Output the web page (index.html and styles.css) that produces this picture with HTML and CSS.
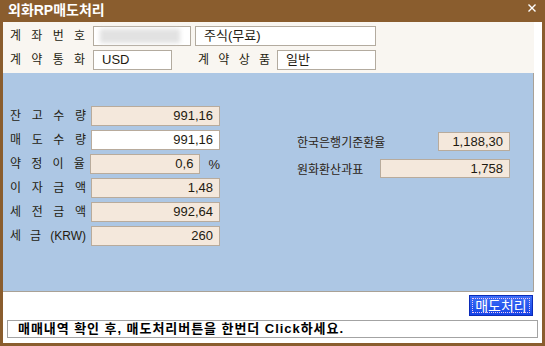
FILE: index.html
```html
<!DOCTYPE html>
<html lang="ko">
<head>
  <meta charset="UTF-8" />
  <title>외화RP매도처리</title>
  <link rel="stylesheet" href="styles.css">
</head>
<body>
  <div class="window">
    <div class="titlebar">
      <span class="title">외화RP매도처리</span>
      <svg class="close" viewBox="0 0 8 8" width="8" height="8">
        <path d="M0.5 0.5L7.5 7.5M7.5 0.5L0.5 7.5" stroke="#fff" stroke-width="1.4"/>
      </svg>
    </div>

    <div class="client">
      <div class="top">
        <div class="row">
          <span class="label">계 좌 번 호</span>
          <div class="field acct"><div class="blur"></div></div>
          <div class="field w181">주식(무료)</div>
        </div>
        <div class="row">
          <span class="label">계 약 통 화</span>
          <div class="field w79">USD</div>
          <span class="label label2">계 약 상 품</span>
          <div class="field w99">일반</div>
        </div>
      </div>

      <div class="panel">
        <div class="col-left">
          <div class="line">
            <span class="label">잔 고 수 량</span>
            <div class="num">991,16</div>
          </div>
          <div class="line">
            <span class="label">매 도 수 량</span>
            <div class="num edit">991,16</div>
          </div>
          <div class="line">
            <span class="label">약 정 이 율</span>
            <div class="num short">0,6</div>
            <span class="unit">%</span>
          </div>
          <div class="line">
            <span class="label">이 자 금 액</span>
            <div class="num">1,48</div>
          </div>
          <div class="line">
            <span class="label">세 전 금 액</span>
            <div class="num">992,64</div>
          </div>
          <div class="line">
            <span class="label">세 금 (KRW)</span>
            <div class="num">260</div>
          </div>
        </div>

        <div class="col-right">
          <div class="line">
            <span>한국은행기준환율</span>
            <div class="num rate">1,188,30</div>
          </div>
          <div class="line">
            <span>원화환산과표</span>
            <div class="num base">1,758</div>
          </div>
        </div>
      </div>

      <div class="footer">
        <button class="sell">매도처리</button>
        <div class="status">매매내역 확인 후, 매도처리버튼을 한번더 Click하세요.</div>
      </div>
    </div>
  </div>
</body>
</html>
```

FILE: styles.css
```css
* {
  box-sizing: border-box;
}

body {
  margin: 0;
  font-family: "Liberation Sans", "Noto Sans CJK KR", sans-serif;
  font-size: 12px;
  color: #2c2416;
}

.window {
  width: 545px;
  height: 346px;
  background: #8a5d2e;
  padding: 0 3px 3px 3px;
  display: flex;
  flex-direction: column;
}

.titlebar {
  height: 22px;
  display: flex;
  align-items: center;
  justify-content: space-between;
  padding: 0 6px 2px 5px;
}

.title {
  color: #fff;
  font-weight: bold;
  font-size: 14px;
  line-height: 16px;
}

.close {
  margin-top: -4px;
}

.client {
  flex: 1;
  background: #fff;
  padding-right: 4px;
  display: flex;
  flex-direction: column;
}

.top {
  height: 51px;
  margin-right: 4px;
  background: #f9f6f1;
  padding: 4px 0 0 7px;
  display: flex;
  flex-direction: column;
  gap: 4px;
}

.row {
  display: flex;
  align-items: center;
  height: 20px;
}

.label {
  width: 75px;
  text-align: justify;
  text-align-last: justify;
  line-height: 16px;
  margin-right: 8px;
  color: #241c10;
}

.label2 {
  width: 72px;
  margin-left: 26px;
  margin-right: 7px;
}

.field {
  height: 20px;
  line-height: 18px;
  background: #fff;
  border: 1px solid #b3ab9f;
  padding-left: 8px;
  font-size: 13px;
  color: #1e1a10;
}

.acct {
  width: 98px;
  margin-right: 4px;
  padding: 2px 8px 2px 6px;
}

.blur {
  height: 100%;
  width: 80px;
  background: #e2e2e2;
  filter: blur(2px);
}

.w181 { width: 181px; }
.w79 { width: 79px; }
.w99 { width: 99px; }

.panel {
  height: 219px;
  margin-right: 4px;
  background: #adc7e4;
  border-right: 1px solid #a9a196;
  border-bottom: 1px solid #a9a196;
  padding: 33px 0 0 7px;
  display: flex;
}

.col-left {
  width: 210px;
  display: flex;
  flex-direction: column;
  gap: 4px;
}

.col-left .line {
  display: flex;
  align-items: center;
  height: 20px;
}

.col-left .label {
  width: 76px;
  margin-right: 5px;
}

.num {
  width: 129px;
  height: 20px;
  line-height: 18px;
  background: #f4e8dc;
  border: 1px solid #b8ab9c;
  text-align: right;
  padding-right: 6px;
  font-size: 13px;
  color: #1e1a10;
}

.num.edit {
  background: #fff;
}

.num.short {
  width: 112px;
}

.unit {
  margin-left: 8px;
  font-size: 13px;
}

.col-right {
  width: 213px;
  margin-left: 77px;
  padding-top: 26px;
  display: flex;
  flex-direction: column;
  gap: 8px;
}

.col-right .line {
  display: flex;
  align-items: center;
  justify-content: space-between;
  height: 19px;
}

.col-right .num {
  height: 19px;
  line-height: 17px;
}

.num.rate { width: 72px; }
.num.base { width: 130px; }

.footer {
  display: flex;
  flex-direction: column;
  align-items: flex-end;
  padding: 3px 0 0 4px;
  gap: 4px;
}

.sell {
  width: 64px;
  height: 21px;
  margin-right: 5px;
  border: 1px solid #0b2bb8;
  background: linear-gradient(#3f70f7, #1443e6);
  color: #fff;
  font-family: "Noto Sans CJK KR", sans-serif;
  font-size: 14px;
  line-height: 17px;
  padding: 0;
  outline: 1px dotted #f2c8f0;
  outline-offset: -4px;
}

.status {
  width: 100%;
  height: 18px;
  border: 1px solid #a3a3a3;
  padding-left: 10px;
  font-weight: bold;
  font-size: 13px;
  line-height: 16px;
  letter-spacing: 0.95px;
  color: #000;
}
```
